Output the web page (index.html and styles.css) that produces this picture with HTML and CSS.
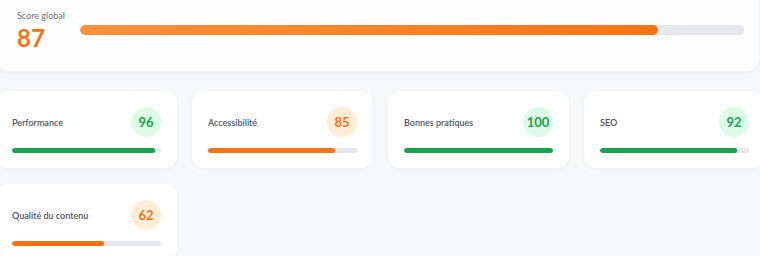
FILE: index.html
```html
<!DOCTYPE html>
<html lang="fr">
<head>
    <meta charset="UTF-8">
    <meta name="viewport" content="width=device-width, initial-scale=1.0">
    <title>Scores</title>
    <link rel="stylesheet" href="styles.css">
</head>
<body>
    <div class="page">
        <!-- Global score -->
        <div class="global-card">
            <div class="global-info">
                <span class="global-label">Score global</span>
                <span class="global-value">87</span>
            </div>
            <div class="global-track">
                <div class="global-fill" style="width: 87%"></div>
            </div>
        </div>

        <!-- Category scores -->
        <div class="score-grid">
            <div class="score-card">
                <div class="score-head">
                    <span class="score-name">Performance</span>
                    <span class="score-badge good">96</span>
                </div>
                <div class="score-track"><div class="score-fill good" style="width: 96%"></div></div>
            </div>
            <div class="score-card">
                <div class="score-head">
                    <span class="score-name">Accessibilité</span>
                    <span class="score-badge warn">85</span>
                </div>
                <div class="score-track"><div class="score-fill warn" style="width: 85%"></div></div>
            </div>
            <div class="score-card">
                <div class="score-head">
                    <span class="score-name">Bonnes pratiques</span>
                    <span class="score-badge good">100</span>
                </div>
                <div class="score-track"><div class="score-fill good" style="width: 100%"></div></div>
            </div>
            <div class="score-card">
                <div class="score-head">
                    <span class="score-name">SEO</span>
                    <span class="score-badge good">92</span>
                </div>
                <div class="score-track"><div class="score-fill good" style="width: 92%"></div></div>
            </div>
            <div class="score-card">
                <div class="score-head">
                    <span class="score-name">Qualité du contenu</span>
                    <span class="score-badge warn">62</span>
                </div>
                <div class="score-track"><div class="score-fill warn" style="width: 62%"></div></div>
            </div>
        </div>
    </div>
</body>
</html>
```

FILE: styles.css
```css
/* Page base */
body {
    margin: 0;
    padding: 0;
    background: #f7f8f9;
    font-family: Lato, "Noto Sans", sans-serif;
    color: #4b5563;
    overflow: hidden;
}

.page {
    width: 769px;
    margin-left: -4px;
}

/* Global score card */
.global-card {
    width: 763px;
    box-sizing: border-box;
    margin-top: -10px;
    padding: 20px 15px 21px 21px;
    background: #fdfdfd;
    border-radius: 12px;
    box-shadow: 0 1px 4px rgba(0, 0, 0, 0.06);
    display: flex;
    align-items: center;
    gap: 15px;
}

.global-info {
    display: flex;
    flex-direction: column;
}

.global-label {
    font-size: 9px;
    line-height: 11px;
    color: #6b7280;
    margin-bottom: 5px;
}

.global-value {
    font-size: 24px;
    line-height: 24px;
    font-weight: bold;
    color: #f97316;
}

.global-track {
    flex: 1;
    height: 10px;
    border-radius: 5px;
    background: #e5e7eb;
    overflow: hidden;
}

.global-fill {
    height: 100%;
    border-radius: 5px;
    background: linear-gradient(90deg, #fb923c, #f97316);
}

/* Category cards */
.score-grid {
    margin-top: 20px;
    display: grid;
    grid-template-columns: repeat(4, 181px);
    gap: 16px 15px;
}

.score-card {
    background: #fff;
    border-radius: 12px;
    padding: 16px 16px 15px;
    box-shadow: 0 1px 4px rgba(0, 0, 0, 0.05);
}

.score-head {
    display: flex;
    justify-content: space-between;
    align-items: center;
}

.score-name {
    font-size: 9px;
    font-weight: 600;
    color: #4b5563;
}

.score-badge {
    width: 30px;
    height: 30px;
    border-radius: 50%;
    display: flex;
    align-items: center;
    justify-content: center;
    font-size: 13px;
    font-weight: bold;
}

.score-badge.good {
    background: #dcfce7;
    color: #16a34a;
}

.score-badge.warn {
    background: #ffedd5;
    color: #f97316;
}

.score-track {
    margin-top: 11px;
    height: 5px;
    border-radius: 3px;
    background: #e5e7eb;
    overflow: hidden;
}

.score-fill {
    height: 100%;
    border-radius: 3px;
}

.score-fill.good {
    background: #16a34a;
}

.score-fill.warn {
    background: #f97316;
}
```
